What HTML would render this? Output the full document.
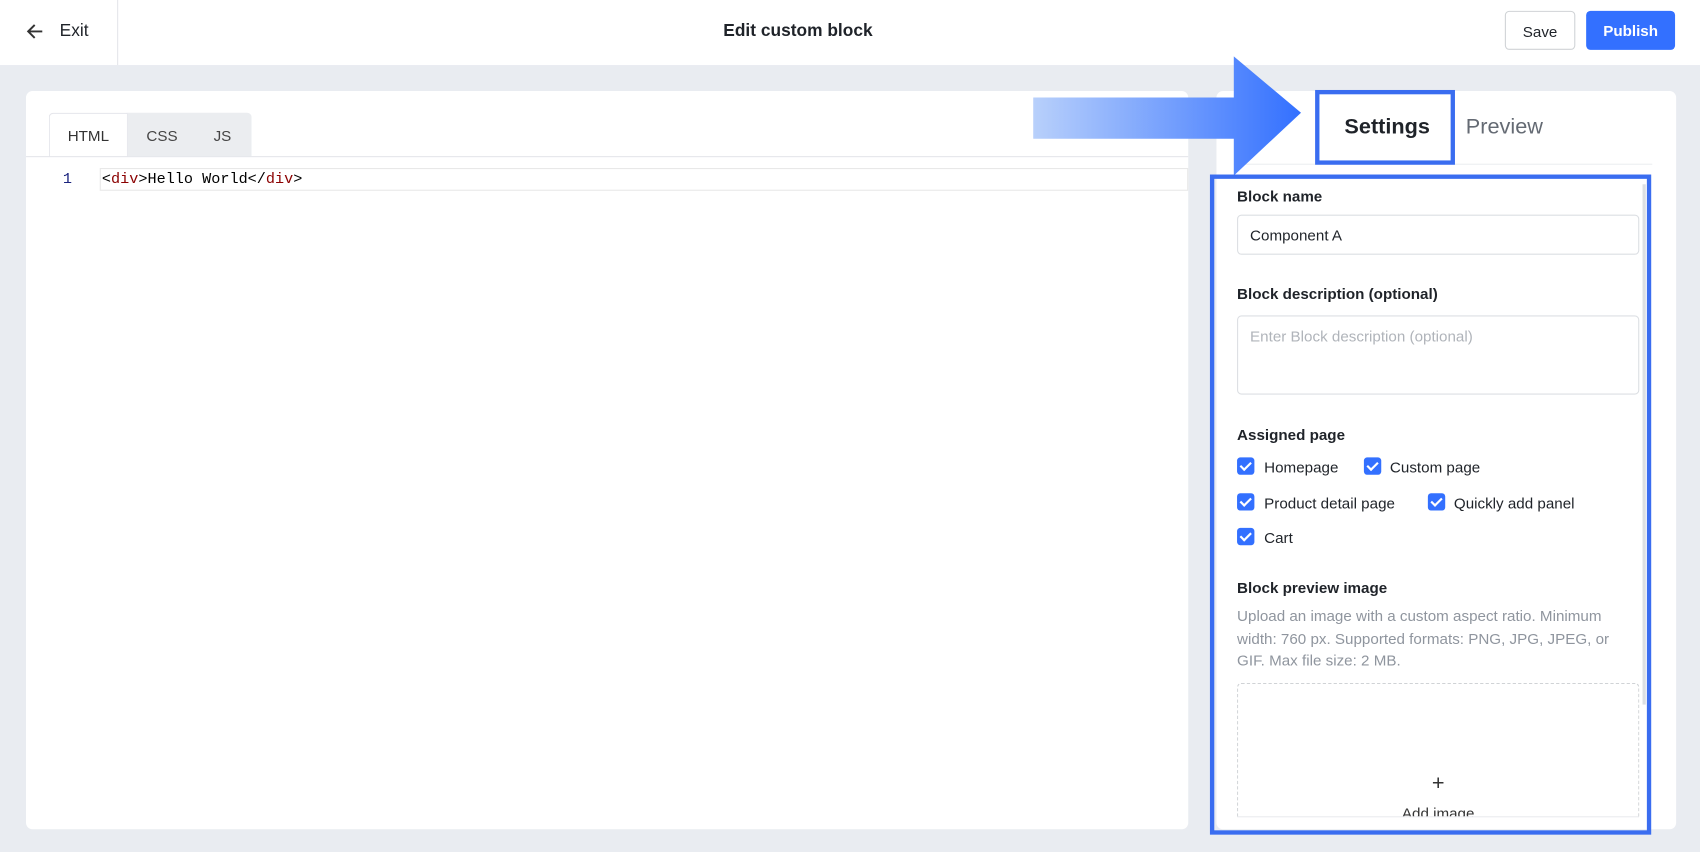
<!DOCTYPE html>
<html><head><meta charset="utf-8"><style>
*{box-sizing:border-box;margin:0;padding:0}
html,body{width:1700px;height:852px;overflow:hidden;background:#e9ecf1;font-family:"Liberation Sans",sans-serif}
#w{position:absolute;left:0;top:0;width:1568px;height:786px;transform:scale(1.08418,1.08397);transform-origin:0 0;background:#e9ecf1}
.a{position:absolute}
.lbl{position:absolute;left:1141px;font-size:14px;font-weight:bold;color:#1f2329}
.cb{position:absolute;width:16px;height:16px;background:#3370ff;border-radius:3px}
.cb:after{content:"";position:absolute;left:5px;top:2px;width:4px;height:8px;border:solid #fff;border-width:0 2px 2px 0;transform:rotate(45deg)}
.ct{position:absolute;font-size:14px;color:#1f2329}
</style></head><body><div id="w">
<div class="a" style="left:0;top:0;width:1568px;height:60px;background:#fff"></div>
<svg class="a" style="left:23px;top:20px" width="18" height="18" viewBox="0 0 18 18"><path d="M16 9H3M9 3L3 9l6 6" fill="none" stroke="#333" stroke-width="1.8"/></svg>
<div class="a" style="left:55px;top:20px;font-size:16px;color:#1f2329">Exit</div>
<div class="a" style="left:108px;top:0;width:1px;height:60px;background:#e5e6eb"></div>
<div class="a" style="left:0;top:20px;width:1472px;text-align:center;font-size:16px;font-weight:bold;color:#1f2329">Edit custom block</div>
<div class="a" style="left:1388px;top:10px;width:65px;height:36px;border:1px solid #d0d3d6;border-radius:4px;font-size:14px;line-height:36px;text-align:center;color:#1f2329">Save</div>
<div class="a" style="left:1463px;top:10px;width:82px;height:36px;background:#3370ff;border-radius:4px;font-size:14px;line-height:37px;text-align:center;color:#fff;font-weight:bold">Publish</div>

<div class="a" style="left:24px;top:84px;width:1072px;height:681px;background:#fff;border-radius:6px"></div>
<div class="a" style="left:118px;top:104px;width:114px;height:40px;background:#ebedf0;border-radius:0 4px 0 0"></div>
<div class="a" style="left:45px;top:104px;width:73px;height:41px;background:#fff;border:1px solid #e5e6eb;border-bottom:none;border-radius:4px 0 0 0;font-size:14px;line-height:40px;text-align:center;color:#333">HTML</div>
<div class="a" style="left:135px;top:105px;font-size:14px;line-height:40px;color:#444">CSS</div>
<div class="a" style="left:197px;top:105px;font-size:14px;line-height:40px;color:#444">JS</div>
<div class="a" style="left:24px;top:144px;width:1072px;height:1px;background:#e5e6eb"></div>
<div class="a" style="left:58px;top:158px;font-family:'Liberation Mono',monospace;font-size:14px;color:#1a237e">1</div>
<div class="a" style="left:92px;top:155px;width:1004px;height:21px;border:1px solid #e8e8e8;font-family:'Liberation Mono',monospace;font-size:14px;line-height:21px;color:#000;padding-left:1px">&lt;<span style="color:#8b0000">div</span>&gt;Hello World&lt;/<span style="color:#8b0000">div</span>&gt;</div>

<div class="a" style="left:1122px;top:84px;width:424px;height:681px;background:#fff;border-radius:6px"></div>
<div class="a" style="left:1138px;top:151px;width:386px;height:1px;background:#eceef1"></div>
<div class="a" style="left:1226px;top:148px;width:106px;height:3px;background:#3370ff"></div>
<div class="a" style="left:1213px;top:83px;width:129px;height:69px;border:4px solid #3a6df0;background:#fff"></div>
<div class="a" style="left:1215px;top:106px;width:129px;text-align:center;font-size:20px;font-weight:bold;color:#1f2329">Settings</div>
<div class="a" style="left:1352px;top:106px;font-size:20px;color:#646a73">Preview</div>
<svg class="a" style="left:950px;top:50px" width="255" height="115"><defs><linearGradient id="g" x1="0" x2="1"><stop offset="0" stop-color="#b8d0fb"/><stop offset="1" stop-color="#3370ff"/></linearGradient></defs><path d="M3 40H188V2L250 54L188 112V78H3Z" fill="url(#g)"/></svg>

<div class="a" style="left:1116px;top:161px;width:407px;height:609px;border:4px solid #3a6df0"></div>
<div class="a" style="left:1515px;top:170px;width:3px;height:480px;background:#dcdfe3"></div>
<div class="lbl" style="top:173px">Block name</div>
<div class="a" style="left:1141px;top:198px;width:371px;height:37px;border:1px solid #dcdfe3;border-radius:4px;font-size:14px;line-height:37px;padding-left:11px;color:#1f2329">Component A</div>
<div class="lbl" style="top:263px">Block description (optional)</div>
<div class="a" style="left:1141px;top:291px;width:371px;height:73px;border:1px solid #dcdfe3;border-radius:4px;font-size:14px;padding:10px 11px;color:#b0b4ba">Enter Block description (optional)</div>
<div class="lbl" style="top:393px">Assigned page</div>
<div class="cb" style="left:1141px;top:422px"></div><div class="ct" style="left:1166px;top:423px">Homepage</div>
<div class="cb" style="left:1258px;top:422px"></div><div class="ct" style="left:1282px;top:423px">Custom page</div>
<div class="cb" style="left:1141px;top:455px"></div><div class="ct" style="left:1166px;top:456px">Product detail page</div>
<div class="cb" style="left:1317px;top:455px"></div><div class="ct" style="left:1341px;top:456px">Quickly add panel</div>
<div class="cb" style="left:1141px;top:487px"></div><div class="ct" style="left:1166px;top:488px">Cart</div>
<div class="lbl" style="top:534px">Block preview image</div>
<div class="a" style="left:1141px;top:558px;width:372px;font-size:14px;line-height:20.5px;color:#8f959e">Upload an image with a custom aspect ratio. Minimum width: 760 px. Supported formats: PNG, JPG, JPEG, or GIF. Max file size: 2 MB.</div>
<div class="a" style="left:1141px;top:630px;width:371px;height:124px;border:1px dashed #d0d3d6;border-bottom:1px solid #e5e6eb;border-radius:4px 4px 0 0;overflow:hidden">
<div class="a" style="left:0;top:81px;width:100%;text-align:center;font-size:20px;color:#333">+</div>
<div class="a" style="left:0;top:111px;width:100%;text-align:center;font-size:14px;color:#333">Add image</div></div>
</div></body></html>
